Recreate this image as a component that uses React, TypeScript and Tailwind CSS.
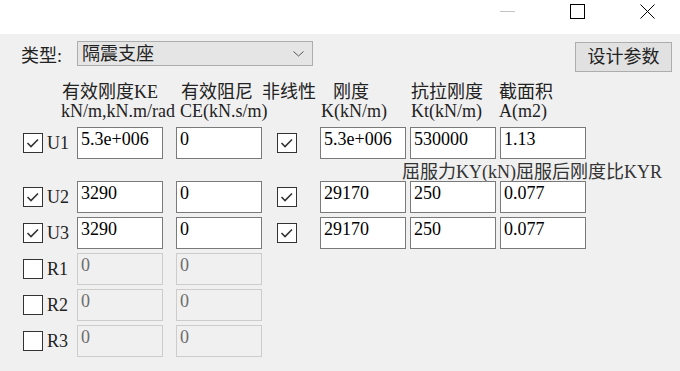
import React from "react";

const font = "font-['Liberation_Serif','Noto_Sans_CJK_SC',serif]";

function Check({ checked }: { checked: boolean }) {
  return (
    <div className="w-[20px] h-[20px] border border-[#333333] bg-white flex items-center justify-center shrink-0">
      {checked && (
        <svg width="18" height="18" viewBox="0 0 18 18">
          <polyline points="3.5,9 7,12.5 14,5.5" fill="none" stroke="#333333" strokeWidth="1.6" />
        </svg>
      )}
    </div>
  );
}

function Field({ value, disabled, className = "" }: { value: string; disabled?: boolean; className?: string }) {
  return (
    <div
      className={
        "w-[86px] h-[32px] border px-[3px] leading-[22px] whitespace-nowrap overflow-hidden shrink-0 " +
        (disabled ? "border-[#cccccc] bg-[#f0f0f0] text-[#6d6d6d] " : "border-[#7a7a7a] bg-white text-black ") +
        className
      }
    >
      {value}
    </div>
  );
}

type Row = {
  name: string;
  on: boolean;
  ke: string;
  ce: string;
  nl?: { k: string; kt: string; a: string };
};

const rows: Row[] = [
  { name: "U1", on: true, ke: "5.3e+006", ce: "0", nl: { k: "5.3e+006", kt: "530000", a: "1.13" } },
  { name: "U2", on: true, ke: "3290", ce: "0", nl: { k: "29170", kt: "250", a: "0.077" } },
  { name: "U3", on: true, ke: "3290", ce: "0", nl: { k: "29170", kt: "250", a: "0.077" } },
  { name: "R1", on: false, ke: "0", ce: "0" },
  { name: "R2", on: false, ke: "0", ce: "0" },
  { name: "R3", on: false, ke: "0", ce: "0" },
];

function DofRow({ row }: { row: Row }) {
  return (
    <div className="flex items-center h-[32px] pl-[23px]">
      <Check checked={row.on} />
      <div className="ml-[4px] w-[30px] leading-[18px] text-[#222222]">{row.name}</div>
      <Field value={row.ke} disabled={!row.on} />
      <Field value={row.ce} disabled={!row.on} className="ml-[13px]" />
      {row.nl && (
        <>
          <div className="ml-[15px]">
            <Check checked />
          </div>
          <Field value={row.nl.k} className="ml-[23px]" />
          <Field value={row.nl.kt} className="ml-[4px]" />
          <Field value={row.nl.a} className="ml-[4px]" />
        </>
      )}
    </div>
  );
}

export default function App() {
  return (
    <div className={"w-[680px] h-[371px] overflow-hidden text-[18px] " + font}>
      <div className="h-[34px] bg-white flex justify-end items-start pt-[4px] pr-[25px] gap-[55px]">
        <div className="w-[15px] h-[15px] flex items-start pt-[7px]">
          <div className="w-[15px] h-[1px] bg-[#c4c4c4]" />
        </div>
        <div className="w-[15px] h-[15px] border border-black" />
        <svg width="15" height="15" viewBox="0 0 15 15">
          <path d="M0.5 0.5 L14.5 14.5 M14.5 0.5 L0.5 14.5" stroke="#000" strokeWidth="1" />
        </svg>
      </div>

      <div className="h-[337px] bg-[#f0f0f0] pt-[7px] text-[#222222]">
        <div className="flex items-start h-[31px]">
          <div className="pl-[21px] w-[77px] mt-[6px] leading-[18px]">类型:</div>
          <div className="w-[236px] h-[25px] border border-[#adadad] bg-[#e5e5e5] flex items-center pl-[4px] pr-[8px]">
            <span className="leading-[18px]">隔震支座</span>
            <svg className="ml-auto" width="11" height="6" viewBox="0 0 11 6">
              <polyline points="0.5,0.5 5.5,5 10.5,0.5" fill="none" stroke="#555" strokeWidth="1" />
            </svg>
          </div>
          <div className="ml-auto mr-[8px] mt-[1px] w-[97px] h-[30px] border border-[#adadad] bg-[#e1e1e1] flex items-center justify-center leading-[18px]">
            设计参数
          </div>
        </div>

        <div className="mt-[11px] flex pl-[61px] leading-[18px] whitespace-nowrap">
          <div className="w-[119px]">
            <div className="pl-[1px]">有效刚度KE</div>
            <div className="mt-[1px]">kN/m,kN.m/rad</div>
          </div>
          <div className="w-[82px]">
            <div className="pl-[1px]">有效阻尼</div>
            <div className="mt-[1px]">CE(kN.s/m)</div>
          </div>
          <div className="w-[58px]">
            <div>非线性</div>
          </div>
          <div className="w-[90px]">
            <div className="pl-[13px]">刚度</div>
            <div className="mt-[1px] pl-[1px]">K(kN/m)</div>
          </div>
          <div className="w-[89px]">
            <div className="pl-[1px]">抗拉刚度</div>
            <div className="mt-[1px] pl-[1px]">Kt(kN/m)</div>
          </div>
          <div>
            <div>截面积</div>
            <div className="mt-[1px]">A(m2)</div>
          </div>
        </div>

        <div className="mt-[7px]">
          <DofRow row={rows[0]} />
        </div>
        <div className="mt-[5px] h-[17px] pl-[402px] leading-[17px] whitespace-nowrap text-[#333333]">
          屈服力KY(kN)屈服后刚度比KYR
        </div>
        <div className="flex flex-col gap-[4px]">
          {rows.slice(1).map((r) => (
            <DofRow key={r.name} row={r} />
          ))}
        </div>
      </div>
    </div>
  );
}
